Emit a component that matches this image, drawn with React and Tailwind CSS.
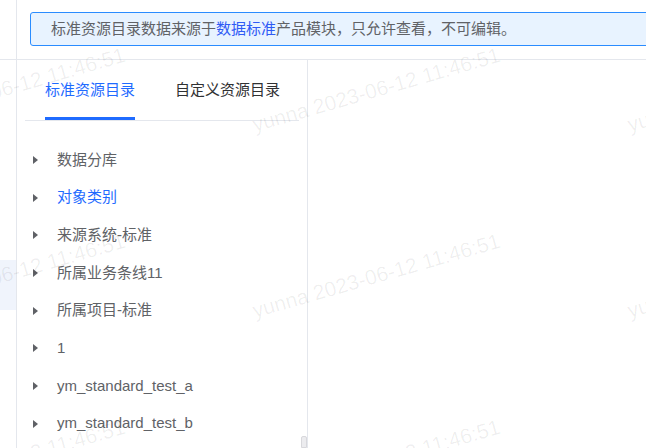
import React from "react";

const items = [
  "数据分库",
  "对象类别",
  "来源系统-标准",
  "所属业务条线11",
  "所属项目-标准",
  "1",
  "ym_standard_test_a",
  "ym_standard_test_b",
];

function Caret() {
  return (
    <svg width="5" height="8" viewBox="0 0 5 8" className="shrink-0">
      <polygon points="0,0 5,4 0,8" fill="#5f6166" />
    </svg>
  );
}

function Watermarks() {
  const marks = [];
  for (let i = 0; i < 3; i++) {
    for (let j = -1; j < 3; j++) {
      marks.push({ x: -120 + 375 * i, y: 132 + 186 * j });
    }
  }
  return (
    <div className="pointer-events-none absolute inset-0 overflow-hidden">
      {marks.map((m, k) => (
        <span
          key={k}
          className="absolute whitespace-nowrap text-[21px] leading-none text-[rgba(0,0,0,0.065)] font-['Liberation_Sans',sans-serif] origin-[0_18px] -rotate-[16deg]"
          style={{ left: m.x, top: m.y - 18 }}
        >
          yunna 2023-06-12 11:46:51
        </span>
      ))}
    </div>
  );
}

export default function App() {
  const active = 1;
  return (
    <div className="relative w-[646px] h-[448px] overflow-hidden bg-white font-['Liberation_Sans','Noto_Sans_CJK_SC',sans-serif]">
      <div className="flex h-[60px] border-b border-[#e4e7ed]">
        <div className="w-[16px] shrink-0" />
        <div className="flex-1 border-l border-[#e4e7ed] pl-[13px] pt-[12px]">
          <div className="-mr-[10px] flex h-[34px] items-center whitespace-nowrap rounded-[3px] border border-[#2a8cff] bg-[#e8f3ff] pl-[20px] text-[15px] text-[#606266]">
            标准资源目录数据来源于<span className="text-[#2f5bf5]">数据标准</span>产品模块，只允许查看，不可编辑。
          </div>
        </div>
      </div>

      <div className="flex h-[388px]">
        <div className="w-[16px] shrink-0 pt-[200px]">
          <div className="h-[50px] bg-[#f0f4fc]" />
        </div>
        <div className="relative w-[292px] shrink-0 border-x border-[#e4e7ed]">
          <div className="mx-[8px] flex h-[61px] border-b border-[#e4e7ed] text-[15px]">
            <div className="relative flex h-[60px] shrink-0 items-center whitespace-nowrap px-[20px] text-[#1f6bff]">
              标准资源目录
              <div className="absolute bottom-0 left-[20px] right-[20px] h-[3px] bg-[#1f6bff]" />
            </div>
            <div className="flex h-[60px] shrink-0 items-center whitespace-nowrap px-[20px] text-[#303133]">
              自定义资源目录
            </div>
          </div>

          <div className="pt-[20px]">
            {items.map((t, i) => (
              <div key={t} className="flex h-[37.7px] items-center pl-[16px]">
                <Caret />
                <span
                  className={
                    "ml-[19px] whitespace-nowrap text-[15px] " +
                    (i === active ? "text-[#1f6bff]" : "text-[#606266]")
                  }
                >
                  {t}
                </span>
              </div>
            ))}
          </div>

          <div className="absolute bottom-0 right-0 h-[12px] w-[6px] rounded-t-[2px] border border-[#d8d8dc] bg-[#ececef]" />
        </div>
        <div className="flex-1" />
      </div>

      <Watermarks />
    </div>
  );
}
